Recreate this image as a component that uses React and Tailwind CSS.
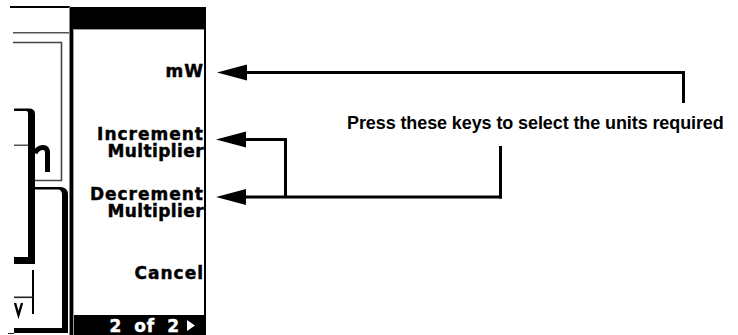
import React from "react";

function ScreenFragment() {
  return (
    <svg width="70" height="335" viewBox="0 0 70 335" className="shrink-0">
      <rect x="10" y="6" width="60" height="2" fill="#000" />
      <rect x="13" y="32" width="57" height="1.5" fill="#555" />
      <path d="M13 42.5 H61.5 V180.5 H35" fill="none" stroke="#444" strokeWidth="1.6" />
      <path d="M14 108.5 H29 Q35 108.5 35 114 V264 H14 V257 H28 V113 Q28 111 26 111 H14 Z" fill="#000" />
      <rect x="14" y="144.5" width="14" height="1.5" fill="#555" />
      <path d="M35 153 Q38 147.5 43 147.5 Q47.5 147.5 47.5 153 V172" fill="none" stroke="#000" strokeWidth="5" />
      <path d="M35 187 H60 Q68 187 68 195 V333 H14 V328 H62 V195 Q62 189.5 58 189.5 H35 Z" fill="#000" />
      <rect x="32" y="270" width="2" height="44" fill="#000" />
      <rect x="14" y="296.5" width="19" height="1.6" fill="#222" />
      <path d="M15 303 L18.5 315 L22 303" fill="none" stroke="#000" strokeWidth="2.4" />
      <rect x="8" y="333" width="6" height="1" fill="#222" />
      <rect x="69" y="7" width="1.2" height="328" fill="#888" />
    </svg>
  );
}

function Arrows() {
  return (
    <svg
      width="738"
      height="335"
      viewBox="0 0 738 335"
      className="absolute left-0 top-0 pointer-events-none"
    >
      <polygon points="217,72.5 247,64.5 247,80.5" fill="#000" />
      <rect x="245" y="71" width="440" height="3" fill="#000" />
      <rect x="682" y="71" width="3" height="32" fill="#000" />
      <polygon points="216,139.5 246,131.5 246,147.5" fill="#000" />
      <rect x="244" y="138" width="43" height="3" fill="#000" />
      <rect x="284" y="138" width="3" height="60" fill="#000" />
      <polygon points="216,197 246,189 246,205" fill="#000" />
      <rect x="244" y="195.5" width="258" height="3" fill="#000" />
      <rect x="499" y="146" width="3" height="52.5" fill="#000" />
    </svg>
  );
}

export default function App() {
  return (
    <div className="relative w-[738px] h-[335px] bg-white overflow-hidden flex">
      <ScreenFragment />
      <div className="mt-[7px] h-[328px] w-[136px] shrink-0 flex flex-col border-l-[3px] border-r-[2px] border-black font-['DejaVu_Sans',sans-serif] font-bold text-black">
        <div className="h-[22px] bg-black shrink-0" />
        <div className="flex-1 flex flex-col border-t border-l border-[#999] text-[17px] leading-[17px] tracking-[1px] text-right [-webkit-text-stroke:0.45px_#000]">
          <div className="mt-[33px]">mW</div>
          <div className="mt-[46px]">
            Increment
            <br />
            <span className="tracking-[0.4px]">Multiplier</span>
          </div>
          <div className="mt-[26px]">
            Decrement
            <br />
            <span className="tracking-[0.4px]">Multiplier</span>
          </div>
          <div className="mt-[45px]">Cancel</div>
          <div className="mt-auto h-[20px] bg-black text-white [-webkit-text-stroke:0.45px_#fff] flex items-start justify-end pr-[9px] pt-[3px] gap-[7px]">
            <span className="[word-spacing:5px]">2 of 2</span>
            <svg width="8" height="11" viewBox="0 0 8 11" className="mt-[2px]">
              <polygon points="0,0 8,5.5 0,11" fill="#fff" />
            </svg>
          </div>
        </div>
      </div>
      <div className="flex-1 pl-[141px] pt-[114px]">
        <p className="font-['Liberation_Sans',Arial,sans-serif] font-bold text-[18px] leading-[18px] text-black whitespace-nowrap tracking-[-0.1px]">
          Press these keys to select the units required
        </p>
      </div>
      <Arrows />
    </div>
  );
}
